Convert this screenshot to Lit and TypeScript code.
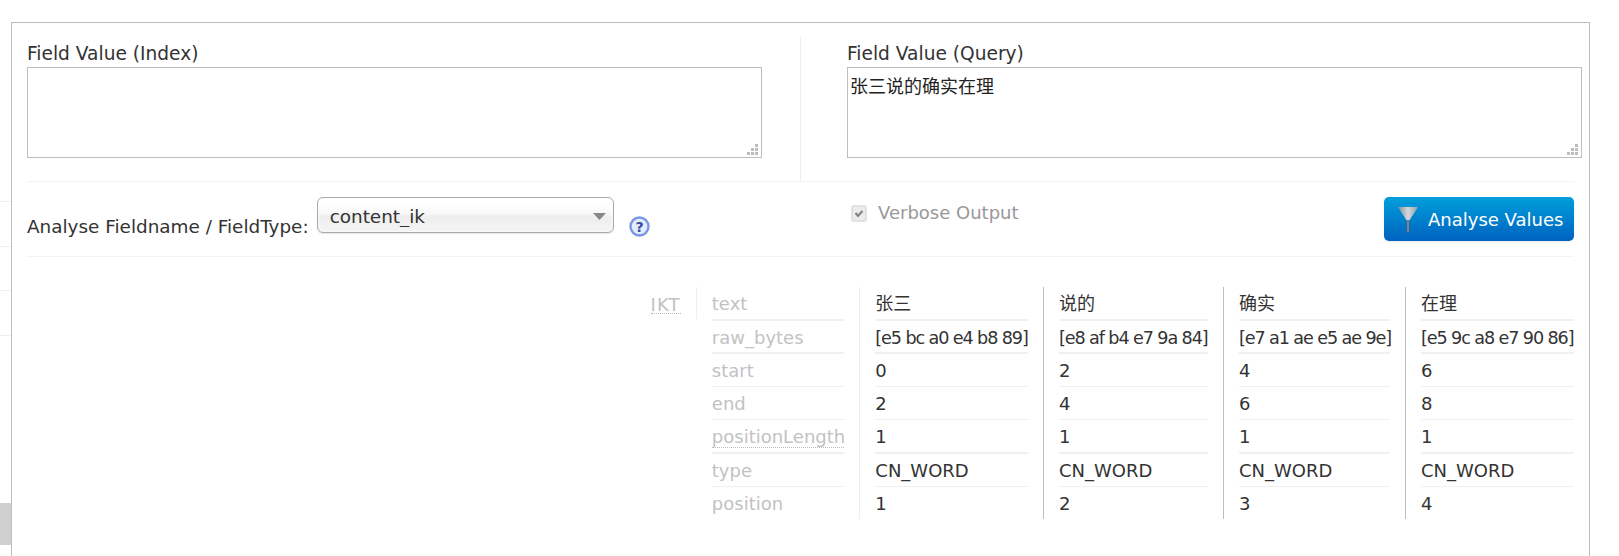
import { LitElement, html, css } from 'lit'
import { customElement } from 'lit/decorators.js'

const labels = [
  { name: 'text', thick: true },
  { name: 'raw_bytes', thick: true },
  { name: 'start' },
  { name: 'end' },
  { name: 'positionLength', thick: true, abbr: true },
  { name: 'type' },
  { name: 'position', last: true },
]

const tokens = [
  { width: 152.7, text: '张三', bytes: '[e5 bc a0 e4 b8 89]', start: 0, end: 2, position: 1 },
  { width: 149, text: '说的', bytes: '[e8 af b4 e7 9a 84]', start: 2, end: 4, position: 2 },
  { width: 151, text: '确实', bytes: '[e7 a1 ae e5 ae 9e]', start: 4, end: 6, position: 3 },
  { width: 153, text: '在理', bytes: '[e5 9c a8 e7 90 86]', start: 6, end: 8, position: 4 },
]

@customElement('app-root')
export class AppRoot extends LitElement {
  static styles = css`
    :host {
      display: flex;
      height: 556px;
      overflow: hidden;
      background: #fff;
      color: #333;
      font-family: 'DejaVu Sans', Verdana, 'Noto Sans CJK SC', sans-serif;
      font-size: 18.4px;
    }

    .sidebar {
      width: 11px;
      flex: none;
      padding-top: 201px;
      box-sizing: border-box;
    }

    .sidebar__item {
      height: 44.5px;
      box-sizing: border-box;
      border-top: 1px solid #eee;
    }

    .sidebar__item--active {
      height: 42px;
      margin-top: 124px;
      border: 0;
      background: #cfcfcf;
    }

    .frame {
      width: 1579px;
      flex: none;
      margin-top: 22px;
      padding: 14px 15px 0;
      box-sizing: border-box;
      border: solid #bdbdbd;
      border-width: 1px 1px 0;
    }

    .fields {
      display: grid;
      grid-template-columns: 774px 726px;
      height: 144px;
      border-bottom: 1px solid #f3f3f3;
    }

    .field--index {
      border-right: 1px solid #efefef;
    }

    .field--query {
      padding-left: 46px;
    }

    .field__label {
      height: 30px;
      line-height: 34px;
      font-size: 18.6px;
      white-space: nowrap;
    }

    .field__box {
      position: relative;
      width: 735px;
      height: 91px;
    }

    textarea {
      display: block;
      width: 100%;
      height: 100%;
      box-sizing: border-box;
      margin: 0;
      padding: 4px 2px;
      border: 1px solid #bdbdbd;
      outline: 0;
      resize: none;
      color: #222;
      font-family: 'Noto Sans CJK SC', sans-serif;
      font-size: 18px;
      line-height: 26px;
    }

    .field__grip {
      position: absolute;
      right: 4px;
      bottom: 3px;
      width: 11px;
      height: 11px;
    }

    .controls {
      display: grid;
      grid-template-columns: 774px 773px;
      height: 75px;
      box-sizing: border-box;
      padding-top: 15px;
      border-bottom: 1px solid #f3f3f3;
    }

    .controls__left,
    .controls__right {
      display: flex;
      align-items: flex-start;
    }

    .controls__right {
      padding-left: 47px;
      justify-content: space-between;
    }

    .controls__label {
      margin-top: 20px;
      line-height: 20px;
      white-space: nowrap;
    }

    .select {
      position: relative;
      width: 297px;
      height: 36px;
      margin-left: 8px;
      flex: none;
    }

    select {
      appearance: none;
      width: 100%;
      height: 100%;
      box-sizing: border-box;
      padding: 3px 0 0 12px;
      border: 1px solid #aaa;
      border-radius: 6px;
      background: linear-gradient(#fff 20%, #f6f6f6 50%, #eee 52%, #f4f4f4 100%);
      box-shadow: inset 0 0 3px #fff, 0 1px 1px rgba(0, 0, 0, 0.1);
      color: #333;
      font: inherit;
    }

    .select__arrow {
      position: absolute;
      top: 16px;
      right: 8px;
      width: 13px;
      height: 7px;
    }

    .help {
      width: 21px;
      height: 21px;
      margin: 19px 0 0 15px;
      flex: none;
    }

    .verbose {
      display: flex;
      align-items: center;
      gap: 11px;
      margin: 6px 0 0 3px;
      color: #999;
      font-size: 18px;
      line-height: 20px;
    }

    .verbose svg {
      width: 16px;
      height: 17px;
    }

    .analyse {
      display: flex;
      align-items: center;
      gap: 10px;
      width: 190px;
      height: 44px;
      box-sizing: border-box;
      padding: 1px 0 0 14px;
      border: 0;
      border-radius: 5px;
      background: linear-gradient(#009fdb, #0062c0);
      box-shadow: 0 1px 2px rgba(0, 0, 0, 0.08);
      color: #fff;
      font: inherit;
      font-size: 18px;
      white-space: nowrap;
    }

    .analyse svg {
      width: 20px;
      height: 26px;
      flex: none;
    }

    .analysis {
      display: flex;
      justify-content: flex-end;
      margin-top: 30px;
      font-size: 18px;
    }

    .analyzer {
      padding-right: 15px;
      height: 32px;
      border-right: 1px solid #efefef;
      color: #c2c2c2;
    }

    .analyzer abbr {
      display: block;
      height: 26px;
      line-height: 36px;
      letter-spacing: 1.2px;
      text-decoration: none;
      border-bottom: 1px dotted #bbb;
    }

    .column {
      padding: 0 15px;
      border-right: 1px solid #bdbdbd;
    }

    .column--labels {
      color: #c2c2c2;
      border-right-color: #efefef;
    }

    .column:last-child {
      border-right: 0;
      padding-right: 0;
    }

    .row {
      height: 33px;
      box-sizing: border-box;
      border-bottom: 1px solid #f0f0f0;
      line-height: 34px;
      white-space: nowrap;
    }

    .row:nth-child(1),
    .row:nth-child(5) {
      height: 34px;
    }

    .row--thick {
      border-bottom-width: 2px;
    }

    .row--last {
      height: 32px;
      border-bottom: 0;
    }

    .row--bytes {
      font-size: 17.6px;
      letter-spacing: -1.1px;
    }

    .row--abbr span {
      display: block;
      height: 27px;
      border-bottom: 1px dotted #bbb;
    }
  `

  render() {
    const thick = (i: number) => (labels[i].thick ? 'row--thick' : '')
    return html`
      <div class="sidebar">
        <div class="sidebar__item"></div>
        <div class="sidebar__item"></div>
        <div class="sidebar__item"></div>
        <div class="sidebar__item"></div>
        <div class="sidebar__item sidebar__item--active"></div>
      </div>
      <div class="frame">
        <div class="fields">
          <div class="field field--index">
            <div class="field__label">Field Value (Index)</div>
            <div class="field__box">
              <textarea></textarea>
              ${this.grip()}
            </div>
          </div>
          <div class="field field--query">
            <div class="field__label">Field Value (Query)</div>
            <div class="field__box">
              <textarea>张三说的确实在理</textarea>
              ${this.grip()}
            </div>
          </div>
        </div>
        <div class="controls">
          <div class="controls__left">
            <span class="controls__label">Analyse Fieldname / FieldType:</span>
            <div class="select">
              <select><option>content_ik</option></select>
              <svg class="select__arrow" viewBox="0 0 13 7"><path d="M0 0h13L6.5 7z" fill="#888" /></svg>
            </div>
            <svg class="help" viewBox="0 0 21 21">
              <circle cx="10.5" cy="10.5" r="9" fill="#e6ecfb" stroke="#7898e4" stroke-width="2.4" />
              <text x="10.5" y="15.5" text-anchor="middle" font-size="14" font-weight="700" fill="#2b4ba8">?</text>
            </svg>
          </div>
          <div class="controls__right">
            <label class="verbose">
              <svg viewBox="0 0 16 17">
                <rect x="1" y="1" width="14" height="15" rx="1.5" fill="#ececec" stroke="#dcdcdc" stroke-width="1.5" />
                <path d="M4.5 8l2.5 3 4.500-5" fill="none" stroke="#808080" stroke-width="2" />
              </svg>
              Verbose Output
            </label>
            <button class="analyse">
              <svg viewBox="0 0 20 26">
                <defs>
                  <linearGradient id="funnel" x1="0" x2="1" y1="0" y2="0">
                    <stop offset="0" stop-color="#7d8f9c" />
                    <stop offset="0.5" stop-color="#d4d8db" />
                    <stop offset="1" stop-color="#8f9da7" />
                  </linearGradient>
                </defs>
                <path d="M0 0h20L11 14H9z" fill="url(#funnel)" />
                <rect x="8.500" y="13" width="3" height="13" fill="#3d5f7f" />
                <rect x="9.500" y="13" width="1" height="12" fill="#9fb2c0" />
              </svg>
              Analyse Values
            </button>
          </div>
        </div>
        <div class="analysis">
          <div class="analyzer"><abbr>IKT</abbr></div>
          <div class="column column--labels" style="width: 132.5px">
            ${labels.map(
              (l) => html`<div class="row ${l.thick ? 'row--thick' : ''} ${l.last ? 'row--last' : ''} ${l.abbr ? 'row--abbr' : ''}">
                <span>${l.name}</span>
              </div>`,
            )}
          </div>
          ${tokens.map(
            (t) => html`<div class="column" style="width: ${t.width}px">
              <div class="row ${thick(0)}">${t.text}</div>
              <div class="row row--bytes ${thick(1)}">${t.bytes}</div>
              <div class="row ${thick(2)}">${t.start}</div>
              <div class="row ${thick(3)}">${t.end}</div>
              <div class="row ${thick(4)}">1</div>
              <div class="row ${thick(5)}">CN_WORD</div>
              <div class="row row--last">${t.position}</div>
            </div>`,
          )}
        </div>
      </div>
    `
  }

  grip() {
    return html`<svg class="field__grip" viewBox="0 0 11 11">
      <path d="M8 0h3v3H8zM4 4h3v3H4zM8 4h3v3H8zM0 8h3v3H0zM4 8h3v3H4zM8 8h3v3H8z" fill="#bdbdbd" />
    </svg>`
  }
}
